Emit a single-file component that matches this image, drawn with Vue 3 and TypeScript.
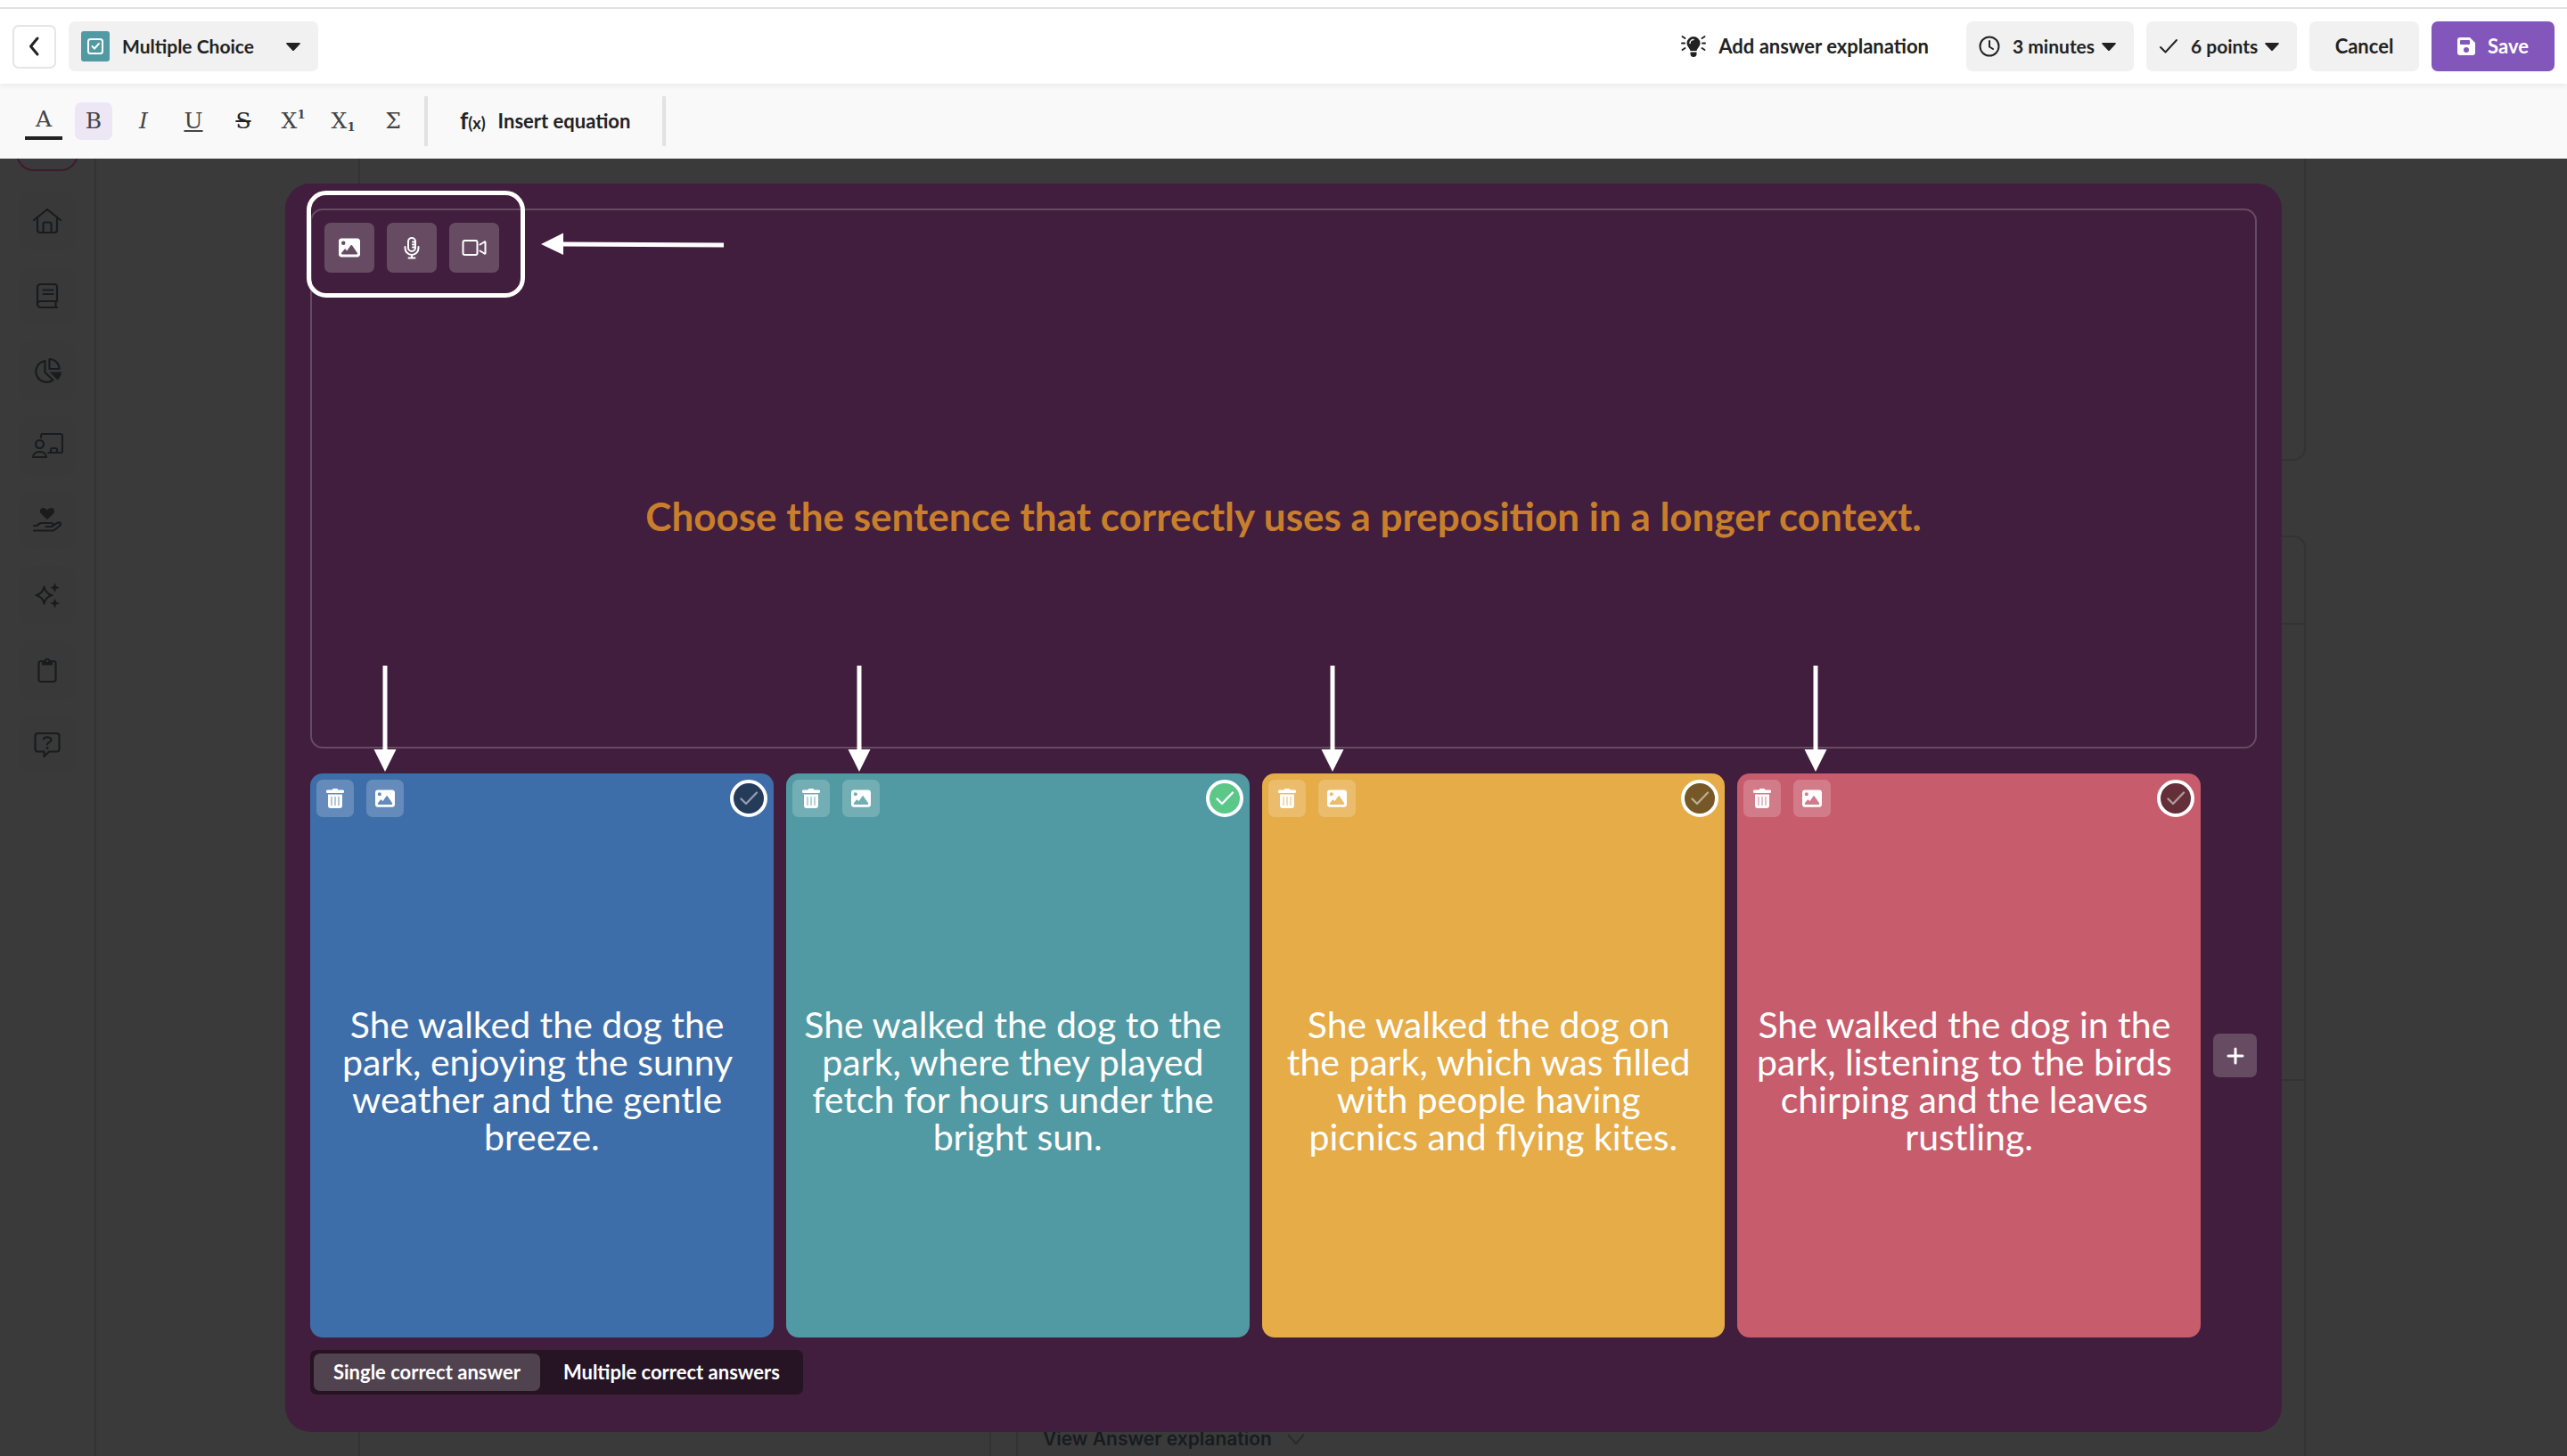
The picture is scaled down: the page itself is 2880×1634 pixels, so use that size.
<script setup lang="ts">
import { ref } from 'vue'

interface Answer {
  id: string
  text: string
  color: string
  mark: string
  arrowX: number
}

const answers: Answer[] = [
  { id: 'a', text: 'She walked the dog the \npark, enjoying the sunny \nweather and the gentle \nbreeze.', color: '#3e6ea9', mark: '#253b5a', arrowX: 84 },
  { id: 'b', text: 'She walked the dog to the \npark, where they played \nfetch for hours under the \nbright sun.', color: '#519aa3', mark: '#2c5459', arrowX: 82 },
  { id: 'c', text: 'She walked the dog on \nthe park, which was filled \nwith people having \npicnics and flying kites.', color: '#e5ac47', mark: '#765826', arrowX: 79 },
  { id: 'd', text: 'She walked the dog in the \npark, listening to the birds \nchirping and the leaves \nrustling.', color: '#c75c6c', mark: '#642f38', arrowX: 88 },
]

const correct = ref<string[]>(['b'])
const answerMode = ref('single')

const questionType = ref('Multiple Choice')
const duration = ref('3 minutes')
const points = ref('6 points')

const imagePath =
  'M0 96C0 60.7 28.7 32 64 32H448c35.3 0 64 28.7 64 64V416c0 35.3-28.7 64-64 64H64c-35.3 0-64-28.7-64-64V96zM323.8 202.5c-4.5-6.6-11.9-10.5-19.8-10.5s-15.4 3.9-19.8 10.5l-87 127.6L170.7 297c-4.6-5.7-11.5-9-18.7-9s-14.2 3.3-18.7 9l-64 80c-5.8 7.2-6.9 17.1-2.9 25.4s12.4 13.6 21.6 13.6h96 32H424c8.9 0 17.1-4.9 21.2-12.8s3.6-17.4-1.4-24.7l-120-176zM112 192a48 48 0 1 0 0-96 48 48 0 1 0 0 96z'

// Navigation glyphs: outlined strokes plus optional solid parts
const navItems = [
  { name: 'Home', line: 'M3 17 18 5 33 17M7 14.500V28a3 3 0 0 0 3 3H26a3 3 0 0 0 3-3V14.500M13.500 31V21.500a2 2 0 0 1 2-2h5a2 2 0 0 1 2 2V31', solid: '' },
  { name: 'Library', line: 'M29 24V7.500a2.500 2.500 0 0 0-2.500-2.500H10.500a3.500 3.500 0 0 0-3.500 3.500V27.500a3.500 3.500 0 0 0 3.500 3.500H29M29 24H10.500a3.500 3.500 0 0 0 0 7M27.500 24v7M13.500 11.500h11M13.500 16h11', solid: '' },
  { name: 'Reports', line: 'M20.500 5v11h11a11 11 0 0 0-11-11zM15.500 7A12 12 0 1 0 24.500 28.500L15.500 20z', solid: 'M20.500 19.500H34a14 14 0 0 1-4.500 9z' },
  { name: 'Classes', line: 'M11 9V7a2 2 0 0 1 2-2h20a2 2 0 0 1 2 2v17a2 2 0 0 1-2 2H19.500M22 26v-3a2 2 0 0 1 2-2h3a2 2 0 0 1 2 2v3M9.500 12a4.500 4.500 0 1 1 0 9 4.500 4.500 0 1 1 0-9zM2 31a7 7 0 0 1 7-6h1a7 7 0 0 1 7 6z', solid: '' },
  { name: 'Wellbeing', line: 'M3 24h3l4.500-3h12c2.500 0 2.500 4 0 4h-6M24 24l6-3.500c3-1 4 2 2 3.500l-7 5.500H3', solid: 'M18 17l-7-6.500C8.500 7.500 10.500 4 13.500 4c2 0 3.500 1 4.500 2.500C19 5 20.500 4 22.500 4c3 0 5 3.500 2.500 6.500z' },
  { name: 'AI tools', line: 'M14.500 8.500c1 5.500 3.500 8 9 9.500-5.500 1.500-8 4-9 9.500-1-5.500-3.500-8-9-9.500 5.500-1.500 8-4 9-9.500z', solid: 'M26.500 4l1.500 4 4 1.500-4 1.500-1.500 4-1.500-4-4-1.500 4-1.500zM26.500 21.500l1.500 4 4 1.500-4 1.500-1.500 4-1.500-4-4-1.500 4-1.500z' },
  { name: 'Assignments', line: 'M13 8h-2a2.500 2.500 0 0 0-2.500 2.500v18A2.500 2.500 0 0 0 11 31h14a2.500 2.500 0 0 0 2.500-2.500v-18A2.500 2.500 0 0 0 25 8h-2', solid: 'M12 7h2.500a3.700 3.700 0 0 1 7 0H24v5.500H12zM18 6.500a1.200 1.200 0 1 0 .1 0z' },
  { name: 'Help', line: 'M7.500 5h21a3 3 0 0 1 3 3v14.500a3 3 0 0 1-3 3H20L14.500 31v-5.500h-7a3 3 0 0 1-3-3V8a3 3 0 0 1 3-3zM14 11.500c.5-3 8.500-3 8.500 1 0 2.500-4.500 2.500-4.500 5', solid: 'M18 20a1.500 1.500 0 1 0 .1 0z' },
]
</script>

<template>
  <div class="page">
    <header class="topbar">
      <button class="back" aria-label="Back">
        <svg width="14" height="24" viewBox="0 0 14 24"><path d="M10 3 2.500 12 10 21" class="stroke" stroke-width="3" /></svg>
      </button>
      <label class="pill type">
        <svg width="32" height="34" viewBox="0 0 32 34">
          <rect width="32" height="34" rx="3" fill="#519aa3" />
          <rect x="8" y="9" width="16" height="16" rx="2.500" fill="none" stroke="#fff" stroke-width="2" />
          <path d="m12.500 17 2.500 2.500 5-5.500" fill="none" stroke="#fff" stroke-width="2" stroke-linecap="round" />
        </svg>
        <select v-model="questionType" aria-label="Question type"><option>Multiple Choice</option></select>
        <svg class="caret" width="16" height="9" viewBox="0 0 16 9"><path d="M1 0h14q1.500.500.500 1.500L9 8.500Q8 9.500 7 8.500L.5 1.500Q-.500.500 1 0z" /></svg>
      </label>
      <div class="actions">
        <button class="explain">
          <svg width="28" height="26" viewBox="0 0 28 26">
            <path d="M14 2a7.500 7.500 0 0 0-7.500 7.500c0 3.500 3 5 4 8.500h7c1-3.500 4-5 4-8.500A7.500 7.500 0 0 0 14 2zM10.500 19.500h7v2a3.500 3.500 0 0 1-7 0z" fill="#222" />
            <path d="M10 9.500A4 4 0 0 1 14 5.500" fill="none" stroke="#fff" stroke-width="1.500" stroke-linecap="round" />
            <path d="M1.500 2l3 2M26.500 2l-3 2M1 9.500h3M27 9.500h-3M1.500 17l3-2M26.500 17l-3-2" class="stroke" stroke-width="2" />
          </svg>
          Add answer explanation
        </button>
        <label class="pill time">
          <svg width="24" height="24" viewBox="0 0 24 24"><circle cx="12" cy="12" r="10.500" class="stroke" stroke-width="2" /><path d="M12 6v6.500l4 2.500" class="stroke" stroke-width="2" /></svg>
          <select v-model="duration" aria-label="Time limit"><option>3 minutes</option></select>
          <svg class="caret" width="16" height="9" viewBox="0 0 16 9"><path d="M1 0h14q1.500.500.500 1.500L9 8.500Q8 9.500 7 8.500L.5 1.500Q-.500.500 1 0z" /></svg>
        </label>
        <label class="pill score">
          <svg width="22" height="22" viewBox="0 0 22 22"><path d="m2 12 5.500 5.500L20 4" class="stroke" stroke-width="2" /></svg>
          <select v-model="points" aria-label="Points"><option>6 points</option></select>
          <svg class="caret" width="16" height="9" viewBox="0 0 16 9"><path d="M1 0h14q1.500.500.500 1.500L9 8.500Q8 9.500 7 8.500L.5 1.500Q-.500.500 1 0z" /></svg>
        </label>
        <button class="pill cancel">Cancel</button>
        <button class="pill save">
          <svg width="20" height="20" viewBox="0 0 20 20"><path fill-rule="evenodd" fill="#fff" d="M3 0h11l6 6v11a3 3 0 0 1-3 3H3a3 3 0 0 1-3-3V3a3 3 0 0 1 3-3zM4 3a1 1 0 0 0-1 1v3a1 1 0 0 0 1 1h9a1 1 0 0 0 1-1V4a1 1 0 0 0-1-1zM10 11a3 3 0 1 0 0 6 3 3 0 1 0 0-6z" /></svg>
          Save
        </button>
      </div>
    </header>

    <div class="toolbar" role="toolbar" aria-label="Text formatting">
      <div class="formats">
        <button class="fmt color" aria-label="Text colour">A</button>
        <button class="fmt active" aria-label="Bold">B</button>
        <button class="fmt italic" aria-label="Italic">I</button>
        <button class="fmt under" aria-label="Underline">U</button>
        <button class="fmt strike" aria-label="Strikethrough">S</button>
        <button class="fmt" aria-label="Superscript">X<sup>1</sup></button>
        <button class="fmt" aria-label="Subscript">X<sub>1</sub></button>
        <button class="fmt" aria-label="Symbols">Σ</button>
      </div>
      <button class="equation"><span class="fx">f<small>(x)</small></span>Insert equation</button>
    </div>

    <main class="stage">
      <div class="underlay">
        <nav class="sidebar">
          <span class="create"></span>
          <a v-for="item in navItems" :key="item.name" href="#" class="nav" :aria-label="item.name">
            <svg width="36" height="36" viewBox="0 0 36 36">
              <path :d="item.line" fill="none" stroke="#191b1d" stroke-width="2.200" stroke-linecap="round" stroke-linejoin="round" />
              <path v-if="item.solid" :d="item.solid" fill="#191b1d" fill-rule="evenodd" />
            </svg>
          </a>
        </nav>
        <div class="backdrop">
          <div class="panel overview"></div>
          <div class="columns">
            <div class="panel summary"></div>
            <div class="panel current">
              <div class="rule head"></div>
              <div class="rule body"></div>
              <div class="view">
                View Answer explanation
                <svg width="22" height="14" viewBox="0 0 22 14"><path d="m2 2 9 10 9-10" fill="none" stroke="#2a2a2a" stroke-width="2" /></svg>
              </div>
            </div>
          </div>
        </div>
      </div>

      <section class="editor">
        <div class="question">
          <div class="media">
            <button class="tool large" aria-label="Add image"><svg width="24" height="24" viewBox="0 0 512 512"><path :d="imagePath" fill="#fff" /></svg></button>
            <button class="tool large" aria-label="Record audio">
              <svg width="18" height="26" viewBox="0 0 18 26">
                <rect x="5" y="2" width="8" height="15" rx="4" class="white" />
                <path d="M1.500 12v1.500a7.500 7.500 0 0 0 15 0V12M9 21v3.500M5.500 24.500h7M10 6.500h3M10 9.500h3M10 12.500h3" class="white" />
              </svg>
            </button>
            <button class="tool large" aria-label="Add video">
              <svg width="28" height="20" viewBox="0 0 28 20"><rect x="1.500" y="2" width="16" height="16" rx="2" class="white" /><path d="M20.500 6.500l5-3q1-.5 1 .5v12q0 1-1 .5l-5-3" class="white" /></svg>
            </button>
          </div>
          <h1>Choose the sentence that correctly uses a preposition in a longer context.</h1>
          <div class="callout"></div>
          <svg class="pointer" width="206" height="26" viewBox="0 0 206 26"><path d="M0 13 25 .5V10.500L205 11.500v5L25 15.500V25z" fill="#fff" /></svg>
        </div>

        <div class="answers">
          <article v-for="a in answers" :key="a.id" class="card" :style="{ background: a.color }">
            <div class="card-tools">
              <button class="tool small" aria-label="Delete answer">
                <svg width="20" height="24" viewBox="0 0 20 24">
                  <path fill="#fff" fill-rule="evenodd" d="M1.500 2.500h5L7.500 1h5l1 1.500h5a1.200 1.200 0 0 1 0 3.500h-17a1.200 1.200 0 0 1 0-3.500zM2 7.500h16V20a3 3 0 0 1-3 3H5a3 3 0 0 1-3-3zM5.500 10v10h1V10zM9.500 10v10h1V10zM13.500 10v10h1V10z" />
                </svg>
              </button>
              <button class="tool small" aria-label="Add image"><svg width="22" height="22" viewBox="0 0 512 512"><path :d="imagePath" fill="#fff" /></svg></button>
              <label class="mark" :class="{ on: correct.includes(a.id) }" :style="{ '--mark': a.mark }">
                <input v-model="correct" type="checkbox" :value="a.id" aria-label="Correct answer" />
                <svg width="22" height="18" viewBox="0 0 22 18"><path d="m2.500 9.500 5.500 5.500L20 2.500" fill="none" stroke="#fff" stroke-width="2.400" stroke-linecap="round" stroke-linejoin="round" /></svg>
              </label>
            </div>
            <p>{{ a.text }}</p>
            <svg class="drop" width="26" height="120" viewBox="0 0 26 120" :style="{ left: a.arrowX + 'px' }"><path d="M10.500 0h5v94H25.500L13 119 .5 94h10z" fill="#fff" /></svg>
          </article>
          <button class="tool add" aria-label="Add answer"><svg width="20" height="20" viewBox="0 0 20 20"><path d="M10 2v16M2 10h16" fill="none" stroke="#fff" stroke-width="3" stroke-linecap="round" /></svg></button>
        </div>

        <div class="modes" role="radiogroup" aria-label="Answer mode">
          <label :class="{ chosen: answerMode === 'single' }"><input v-model="answerMode" type="radio" name="mode" value="single" />Single correct answer</label>
          <label :class="{ chosen: answerMode === 'multiple' }"><input v-model="answerMode" type="radio" name="mode" value="multiple" />Multiple correct answers</label>
        </div>
      </section>
    </main>
  </div>
</template>

<style>
body {
  margin: 0;
}
</style>

<style scoped>
* {
  box-sizing: border-box;
}
.page {
  min-height: 100vh;
  display: flex;
  flex-direction: column;
  font-family: Lato, "Liberation Sans", sans-serif;
  font-size: 22px;
  font-weight: 700;
  line-height: 28px;
  color: #222;
  background: #3a3a3a;
}
button,
select {
  font: inherit;
  color: inherit;
  border: 0;
  background: none;
  padding: 0;
  margin: 0;
}
button {
  display: flex;
  align-items: center;
  justify-content: center;
  cursor: pointer;
}
select {
  appearance: none;
  outline: 0;
  font-size: 21px;
}
svg {
  display: block;
  flex: none;
}
.stroke {
  fill: none;
  stroke: #222;
  stroke-linecap: round;
  stroke-linejoin: round;
}
.white {
  fill: none;
  stroke: #fff;
  stroke-width: 2;
  stroke-linecap: round;
  stroke-linejoin: round;
}
.caret {
  fill: #222;
}

.topbar {
  position: relative;
  z-index: 1;
  height: 94px;
  padding: 10px 14px 0;
  display: flex;
  align-items: center;
  gap: 14px;
  background: linear-gradient(#fff 8px, #e2e2e2 8px, #e2e2e2 10px, #fff 10px);
  box-shadow: 0 2px 6px rgba(0, 0, 0, 0.07);
}
.back {
  width: 49px;
  height: 49px;
  border: 2px solid #e5e5e5;
  border-radius: 7px;
}
.pill {
  height: 56px;
  display: flex;
  align-items: center;
  gap: 14px;
  padding: 0 14px;
  border-radius: 7px;
  background: #f1f1f1;
}
.pill select {
  flex: 1;
  min-width: 0;
}
.type {
  width: 280px;
}
.type .caret {
  margin-right: 6px;
}
.actions {
  margin-left: auto;
  display: flex;
  gap: 14px;
}
.explain {
  gap: 14px;
  margin-right: 28px;
}
.time {
  width: 188px;
}
.score {
  width: 169px;
}
.time select,
.score select {
  margin-right: -10px;
}
.time .caret,
.score .caret {
  margin-right: 6px;
}
.cancel {
  width: 123px;
}
.save {
  width: 138px;
  background: #8256ba;
  color: #fff;
}

.toolbar {
  height: 84px;
  padding: 14px 28px;
  display: flex;
  background: #f9f9f9;
}
.formats {
  display: flex;
  align-items: center;
  gap: 14px;
  padding-right: 14px;
  border-right: 4px solid #e2e2e2;
}
.fmt {
  width: 42px;
  height: 42px;
  border-radius: 7px;
  font-family: "DejaVu Serif", serif;
  font-weight: 400;
  font-size: 25px;
  color: #444;
}
.fmt sup,
.fmt sub {
  font-size: 13px;
  line-height: 14px;
  font-weight: 700;
}
.fmt sup {
  align-self: flex-start;
  margin-top: 7px;
}
.fmt sub {
  align-self: flex-end;
  margin-bottom: 7px;
}
.color {
  border-bottom: 4px solid #222;
  border-radius: 0;
}
.active {
  background: #ece6f5;
}
.italic {
  font-style: italic;
}
.under {
  text-decoration: underline;
}
.strike {
  text-decoration: line-through;
  color: #222;
}
.equation {
  gap: 14px;
  padding: 0 36px;
  border-right: 4px solid #e2e2e2;
}
.fx {
  font-size: 26px;
}
.fx small {
  font-size: 18px;
}

.stage {
  position: relative;
  flex: 1;
  display: flex;
  padding: 28px 320px;
}
.underlay {
  position: absolute;
  inset: 0;
  overflow: hidden;
  display: flex;
}
.sidebar {
  width: 108px;
  border-right: 2px solid #333;
  display: flex;
  flex-direction: column;
  align-items: center;
  gap: 18px;
}
.create {
  width: 70px;
  height: 70px;
  margin: -56px 0 5px;
  flex: none;
  border: 2px solid #3f1a2c;
  border-radius: 20px;
}
.nav {
  width: 66px;
  height: 66px;
  flex: none;
  border-radius: 18px;
  background: #393939;
  display: flex;
  align-items: center;
  justify-content: center;
}
.backdrop {
  flex: 1;
  margin: -12px 293px -20px 294px;
  display: flex;
  flex-direction: column;
  gap: 84px;
}
.panel {
  border: 2px solid #333;
  border-radius: 14px;
}
.overview {
  height: 351px;
}
.columns {
  flex: 1;
  display: flex;
  gap: 28px;
}
.summary {
  width: 710px;
}
.current {
  flex: 1;
  display: flex;
  flex-direction: column;
}
.rule {
  border-bottom: 2px solid #333;
}
.head {
  height: 98px;
}
.body {
  height: 512px;
}
.view {
  margin: auto 0 24px 28px;
  display: flex;
  align-items: center;
  gap: 16px;
  font-family: Inter, sans-serif;
  font-size: 21px;
  font-weight: 600;
  color: #191b1d;
}

.editor {
  position: relative;
  flex: 1;
  min-width: 0;
  display: flex;
  flex-direction: column;
  padding: 28px 28px 42px;
  border-radius: 28px;
  background: #411e3d;
}
.question {
  position: relative;
  flex: 1 1 606px;
  display: flex;
  flex-direction: column;
  padding: 14px 14px 0;
  border: 2px solid #674b65;
  border-radius: 14px;
}
.media {
  display: flex;
  gap: 14px;
  padding-bottom: 14px;
}
.tool {
  border-radius: 7px;
  background: rgba(255, 255, 255, 0.2);
}
.large {
  width: 56px;
  height: 56px;
}
.small {
  width: 42px;
  height: 42px;
}
h1 {
  margin: auto;
  font-size: 44px;
  line-height: 42px;
  color: #c87f2c;
  text-align: center;
}
.callout {
  position: absolute;
  left: -6px;
  top: -22px;
  width: 245px;
  height: 120px;
  border: 5px solid #fff;
  border-radius: 22px;
}
.pointer {
  position: absolute;
  left: 257px;
  top: 25px;
}
.answers {
  flex: 1 1 633px;
  display: flex;
  align-items: center;
  gap: 14px;
  margin: 28px 0 14px;
}
.card {
  position: relative;
  flex: 1;
  align-self: stretch;
  display: flex;
  flex-direction: column;
  padding: 7px;
  border-radius: 14px;
  color: #fff;
}
.card-tools {
  display: flex;
  gap: 14px;
  margin-bottom: 14px;
}
.card p {
  margin: auto 0;
  font-size: 41px;
  line-height: 42px;
  font-weight: 400;
  text-align: center;
  white-space: break-spaces;
}
.mark {
  margin-left: auto;
  width: 42px;
  height: 42px;
  display: flex;
  align-items: center;
  justify-content: center;
  border: 4px solid #fff;
  border-radius: 50%;
  background: var(--mark);
}
.mark svg {
  opacity: 0.5;
}
.mark.on {
  background: #5bc889;
}
.mark.on svg {
  opacity: 1;
}
.mark input,
.modes input {
  position: absolute;
  opacity: 0;
  margin: 0;
}
.drop {
  position: absolute;
  top: -121px;
  transform: translateX(-50%);
}
.add {
  width: 49px;
  height: 49px;
}
.modes {
  align-self: flex-start;
  display: flex;
  gap: 4px;
  padding: 4px;
  border-radius: 7px;
  background: #261323;
  color: #fff;
}
.modes label {
  padding: 7px 22px;
  border-radius: 7px;
}
.chosen {
  background: #51424f;
}
</style>
